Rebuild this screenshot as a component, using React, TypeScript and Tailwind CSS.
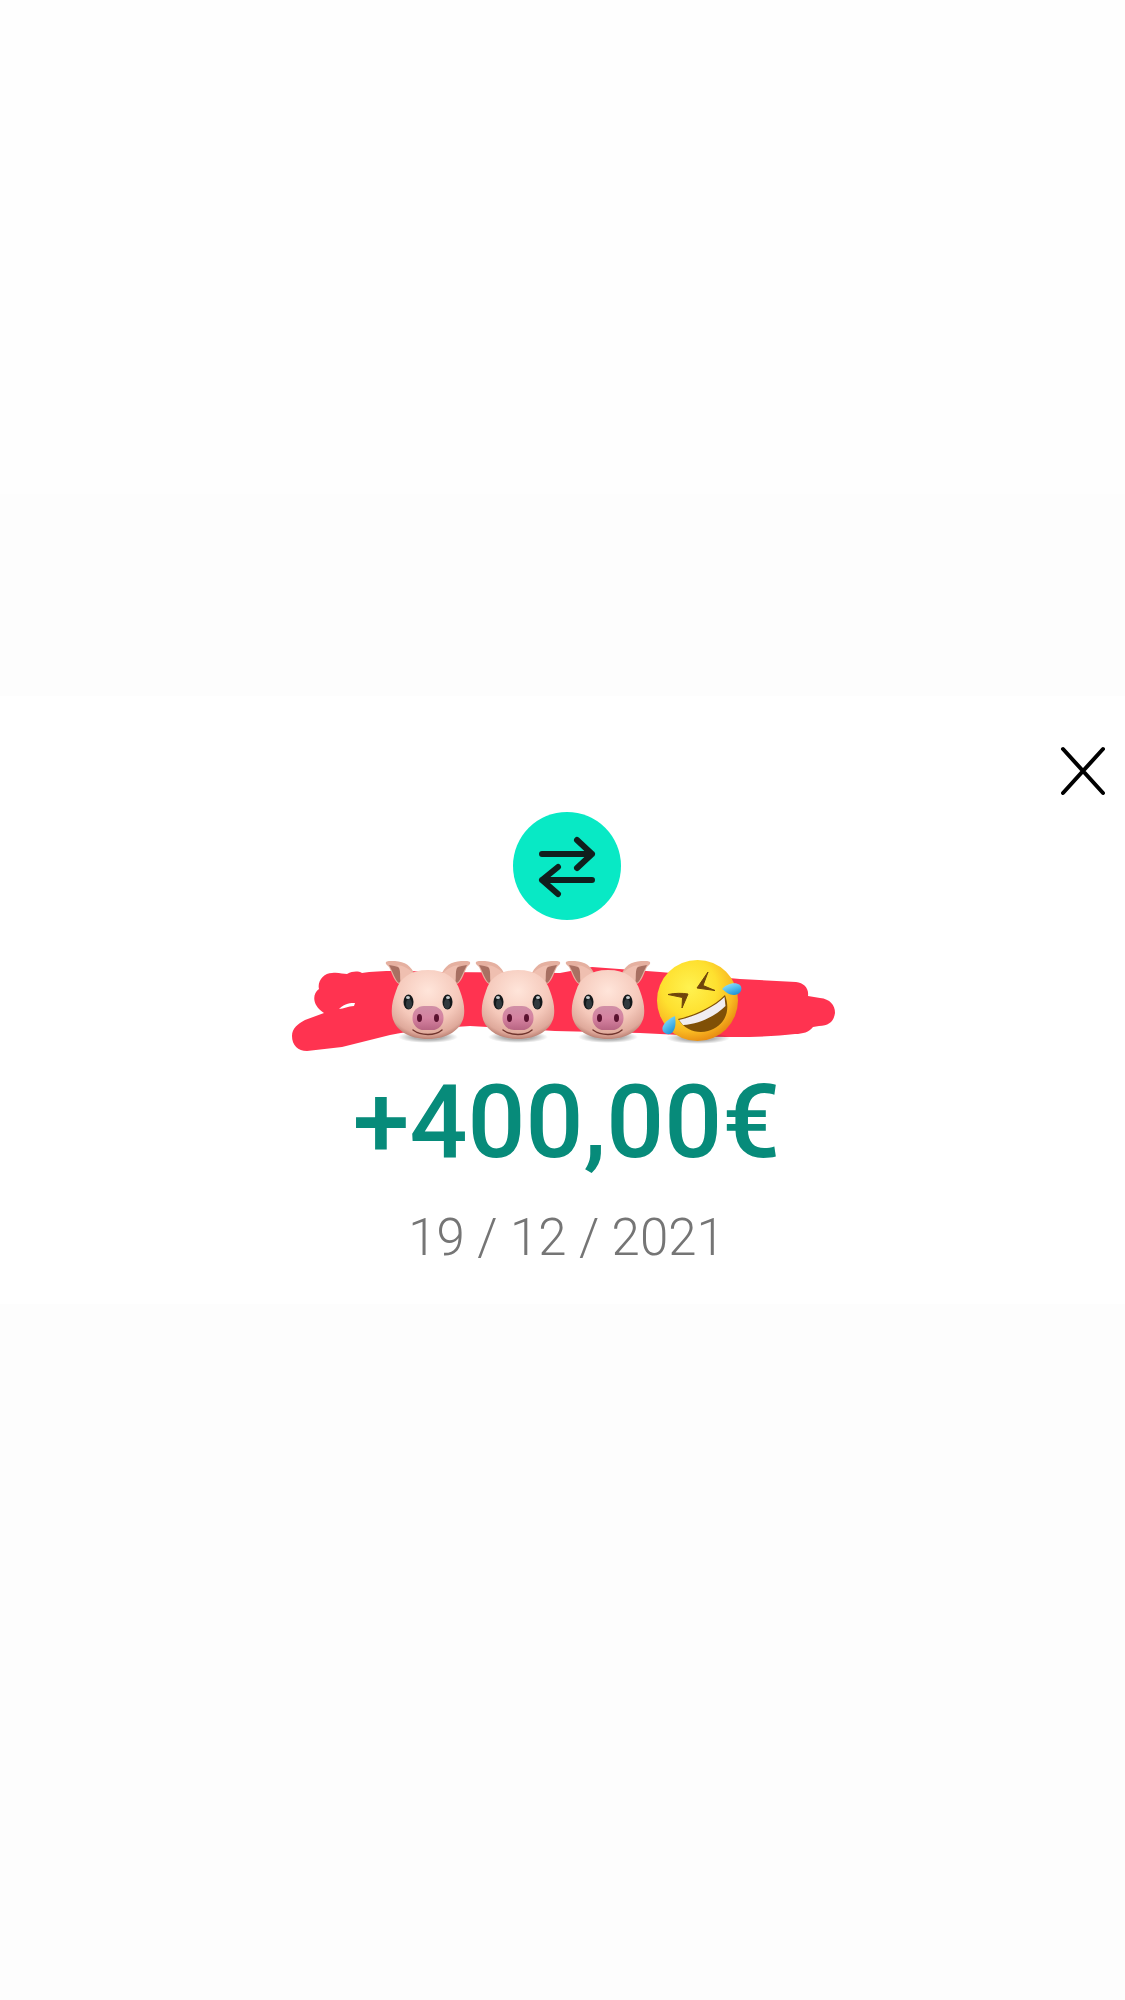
interface PigFaceProps {
  x: number;
}

// Pig emoji, 86 wide and 80 tall, placed at x inside the scribble
const PigFace = ({ x }: PigFaceProps) => {
  return (
    <g transform={`translate(${x} 20)`}>
      <ellipse cx="43" cy="77" rx="30" ry="6" fill="url(#shadow)" />
      <path
        d="M1 4C0 1 3 1 6 1C17 1 24 3 29 13L14 24C9 21 7 13 4 7Z"
        fill="#e5b0a0"
      />
      <path d="M4 5C11 6 19 8 22 14L14 23C10 20 8 12 4 5Z" fill="#a87062" />
      <path d="M12 5C20 6 24 9 28 13L16 24C14 17 17 10 12 5Z" fill="#efbfb0" />
      <path
        d="M85 4C86 1 83 1 80 1C69 1 62 3 57 13L72 24C77 21 79 13 82 7Z"
        fill="#e5b0a0"
      />
      <path d="M82 5C75 6 67 8 64 14L72 23C76 20 78 12 82 5Z" fill="#a87062" />
      <path d="M74 5C66 6 62 9 58 13L70 24C72 17 69 10 74 5Z" fill="#efbfb0" />
      <path
        d="M43 10C25 10 15 18 11 31C8 39 6 47 7 55C9 70 24 79 43 79C62 79 77 70 79 55C80 47 78 39 75 31C71 18 61 10 43 10Z"
        fill="url(#pigSkin)"
      />
      <ellipse cx="23.5" cy="42" rx="5" ry="7.5" fill="#14191b" />
      <ellipse cx="62.5" cy="42" rx="5" ry="7.5" fill="#14191b" />
      <ellipse cx="24" cy="44" rx="3" ry="5" fill="#30393d" />
      <ellipse cx="62" cy="44" rx="3" ry="5" fill="#30393d" />
      <ellipse cx="23" cy="37.5" rx="2" ry="1.5" fill="#c8cdd0" />
      <ellipse cx="63" cy="37.5" rx="2" ry="1.5" fill="#c8cdd0" />
      <path
        d="M28 70C36 76 50 76 57 70"
        fill="none"
        stroke="#70352e"
        strokeWidth="1.4"
        strokeLinecap="round"
      />
      <rect x="27.5" y="46" width="31" height="24" rx="11.5" fill="url(#snout)" />
      <ellipse cx="34.5" cy="58" rx="2.5" ry="4" fill="#5b1230" />
      <ellipse cx="51.5" cy="58" rx="2.5" ry="4" fill="#5b1230" />
    </g>
  );
};

const LaughingFace = () => {
  return (
    <g transform="translate(375 18)">
      <ellipse cx="43" cy="80" rx="32" ry="6" fill="url(#shadow)" />
      <circle cx="42.5" cy="42.5" r="40.5" fill="url(#laugh)" />
      <g fill="#70450b" stroke="#70450b" strokeWidth="1" strokeLinejoin="round">
        <path d="M53 14L42 30L60 32.5L48 27.5Z" />
        <path d="M13 36.5C20 35 27 35 33 36L27 50L27.5 39.5Z" />
      </g>
      <path
        d="M23 61C40 57 58 49 70 37C77 56 67 69 53 73C42 76 30 72 23 61Z"
        fill="#805006"
      />
      <path
        d="M24 62C41 58 58 50 69.5 39L70.5 48C59 59 44 66 28 67Z"
        fill="#f1edf0"
      />
      <path
        d="M67 31C71 26 80 23 85 27C89 32 84 37 79 37C74 37 71 34 67 31Z"
        fill="url(#tear)"
      />
      <path
        d="M20 58C21 65 21 73 15 76C9 77 6 72 8 68C10 64 15 60 20 58Z"
        fill="url(#tear)"
      />
    </g>
  );
};

const Scribble = () => {
  return (
    <svg
      viewBox="2 0 570 130"
      className="block w-[570px] max-w-full"
      role="img"
      aria-label="Hidden name"
    >
      <defs>
        <radialGradient id="pigSkin" cx="0.5" cy="0.3" r="0.72">
          <stop offset="0" stopColor="#ffe5da" />
          <stop offset="0.6" stopColor="#f5c9bb" />
          <stop offset="0.88" stopColor="#dfa99b" />
          <stop offset="1" stopColor="#b4786b" />
        </radialGradient>
        <linearGradient id="snout" x1="0" y1="0" x2="0" y2="1">
          <stop offset="0" stopColor="#d08fa6" />
          <stop offset="0.5" stopColor="#d583a1" />
          <stop offset="1" stopColor="#b86583" />
        </linearGradient>
        <radialGradient id="laugh" cx="0.4" cy="0.34" r="0.68">
          <stop offset="0" stopColor="#fff250" />
          <stop offset="0.5" stopColor="#fee02f" />
          <stop offset="0.8" stopColor="#f9b922" />
          <stop offset="1" stopColor="#e88d12" />
        </radialGradient>
        <linearGradient id="tear" x1="0" y1="0" x2="0.6" y2="1">
          <stop offset="0" stopColor="#a5eafd" />
          <stop offset="0.5" stopColor="#5fc3f0" />
          <stop offset="1" stopColor="#2195d8" />
        </linearGradient>
        <radialGradient id="shadow">
          <stop offset="0.5" stopColor="#000" stopOpacity="0.3" />
          <stop offset="1" stopColor="#000" stopOpacity="0" />
        </radialGradient>
      </defs>
      <path
        fillRule="evenodd"
        d="M44 73C32 65 32 54 39 49C37 41 44 33 52 33C58 32 63 34 67 34C73 31 78 31 82 33C100 30 130 31 155 32L280 33L312 27L380 32L460 39L516 42C524 43 529 48 528 56L540 58C550 59 555 65 555 73C554 81 549 86 539 86L533 87C529 92 523 94 515 94C490 97 450 98 420 96L360 93L275 91L190 86C160 88 135 90 110 95L62 107L27 111C18 111 12 105 12 96C12 88 18 84 25 80ZM59 69C65 63 71 63 75 63L74 66C68 66 64 69 59 69Z"
        fill="#ff3350"
      />
      <PigFace x={105} />
      <PigFace x={195} />
      <PigFace x={285} />
      <LaughingFace />
    </svg>
  );
};

export default function App() {
  return (
    <div className="min-h-screen bg-[#fdfdfd] font-[Roboto,sans-serif]">
      <div className="h-[494px] bg-[#fefefe]" />
      <main className="mt-[202px] bg-white pt-[50px] pb-9">
        <div className="flex justify-end pr-[19px]">
          <button type="button" aria-label="Close">
            <svg viewBox="0 0 46 50" className="block h-[50px] w-[46px]">
              <path
                d="M3 3L43 47M43 3L3 47"
                stroke="#000"
                strokeWidth="4"
                strokeLinecap="round"
              />
            </svg>
          </button>
        </div>
        <div className="flex flex-col items-center pt-4 pl-2">
          <div className="rounded-full bg-[#08e9c5]">
            <svg
              viewBox="0 0 108 108"
              className="block size-[108px]"
              fill="none"
              stroke="#101f1d"
              strokeWidth="6"
              strokeLinecap="round"
              strokeLinejoin="round"
            >
              <path d="M29 42H79M64 28L79 42L64 56" />
              <path d="M79 68H29M45 55L29 68L45 82" />
            </svg>
          </div>
          <div className="pt-5">
            <Scribble />
          </div>
          <h1 className="text-[102px] leading-[104px] font-medium text-[#078b7a]">
            +400,00€
          </h1>
          <p className="pt-[34px] text-[51px] leading-[60px] font-light text-[#757575]">
            19 / 12 / 2021
          </p>
        </div>
      </main>
    </div>
  );
}
